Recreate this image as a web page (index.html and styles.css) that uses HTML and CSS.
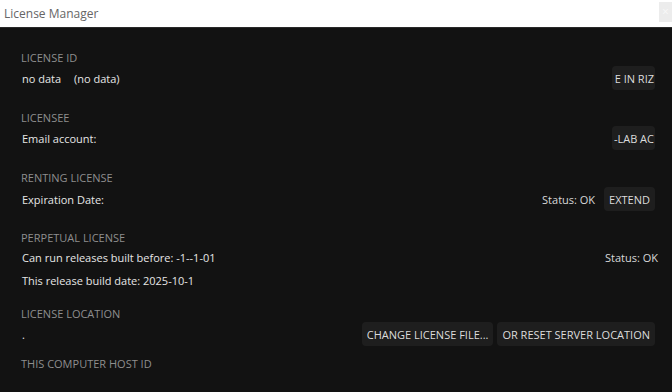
FILE: index.html
```html
<!DOCTYPE html>
<html lang="en">
<head>
  <meta charset="UTF-8" />
  <title>License Manager</title>
  <link rel="stylesheet" href="styles.css">
</head>
<body>
  <header class="titlebar">
    <div class="title">License Manager</div>
    <div class="close">&times;</div>
  </header>

  <main class="panel">
    <section class="section">
      <div class="label">LICENSE ID</div>
      <div class="row">
        <div class="value">no data <span class="gap">(no data)</span></div>
        <div class="actions">
          <button class="btn btn-clip">E IN RIZ</button>
        </div>
      </div>
    </section>

    <section class="section">
      <div class="label">LICENSEE</div>
      <div class="row">
        <div class="value">Email account:</div>
        <div class="actions">
          <button class="btn btn-clip">-LAB AC</button>
        </div>
      </div>
    </section>

    <section class="section section-renting">
      <div class="label">RENTING LICENSE</div>
      <div class="row row-tall">
        <div class="value">Expiration Date:</div>
        <div class="actions">
          <span class="status">Status: OK</span>
          <button class="btn">EXTEND</button>
        </div>
      </div>
    </section>

    <section class="section section-tight">
      <div class="label">PERPETUAL LICENSE</div>
      <div class="row row-text">
        <div class="value">Can run releases built before: -1--1-01</div>
        <div class="actions">
          <span class="status status-end">Status: OK</span>
        </div>
      </div>
      <div class="row row-text">
        <div class="value">This release build date: 2025-10-1</div>
      </div>
    </section>

    <section class="section section-tighter">
      <div class="label">LICENSE LOCATION</div>
      <div class="row">
        <div class="value">.</div>
        <div class="actions">
          <button class="btn">CHANGE LICENSE FILE...</button>
          <button class="btn">OR RESET SERVER LOCATION</button>
        </div>
      </div>
    </section>

    <section class="section">
      <div class="label">THIS COMPUTER HOST ID</div>
    </section>
  </main>
</body>
</html>
```

FILE: styles.css
```css
html, body {
  height: 100%;
}

body {
  margin: 0;
  background-color: #121212;
  color: #e6e6e6;
  font-family: 'Open Sans', 'Noto Sans', sans-serif;
  font-size: 11px;
  display: flex;
  flex-direction: column;
  overflow: hidden;
}

.titlebar {
  height: 27px;
  background-color: #ffffff;
  border-bottom: 1px solid #2a2a2a;
  display: flex;
  align-items: center;
  justify-content: space-between;
  flex-shrink: 0;
}

.title {
  padding-left: 4px;
  font-family: 'Open Sans', sans-serif;
  font-size: 12px;
  color: #666666;
}

.close {
  align-self: flex-start;
  margin-top: 2px;
  width: 13px;
  height: 20px;
  background-color: #ececec;
  color: #f8f8f8;
  font-size: 12px;
  line-height: 20px;
  text-align: center;
}

.panel {
  flex: 1;
  padding: 22px 17px 0 21px;
  background-color: #121212;
}

.section {
  margin-bottom: 20px;
}

.section-renting {
  margin-bottom: 18px;
}

.section-tight {
  margin-bottom: 14px;
}

.section-tighter {
  margin-bottom: 10px;
}

.label {
  height: 16px;
  line-height: 16px;
  color: #8e8e8e;
  font-size: 11px;
}

.row {
  height: 24px;
  display: flex;
  align-items: center;
  justify-content: space-between;
}

.row-tall {
  height: 26px;
}

.row-text {
  height: 23px;
}

.value {
  padding-left: 1px;
  white-space: nowrap;
}

.gap {
  margin-left: 10px;
}

.actions {
  display: flex;
  align-items: center;
  gap: 4px;
}

.status {
  margin-right: 5px;
  color: #d8d8d8;
}

.status-end {
  margin-right: -3px;
}

.btn {
  height: 24px;
  padding: 0 5px;
  border: none;
  border-radius: 4px;
  background-color: #1e1e1e;
  color: #dcdcdc;
  font-family: 'Open Sans', 'Noto Sans', sans-serif;
  font-size: 11px;
  white-space: nowrap;
}

.btn-clip {
  width: 43px;
  padding: 0 1px;
  overflow: hidden;
  display: flex;
  align-items: center;
  justify-content: flex-end;
}
```
